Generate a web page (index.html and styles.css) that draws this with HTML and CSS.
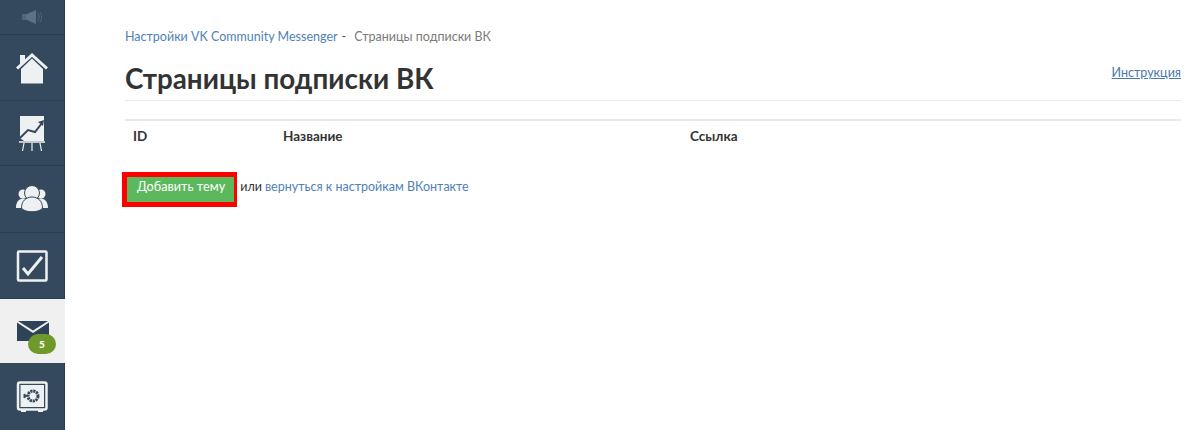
FILE: index.html
```html
<!DOCTYPE html>
<html lang="ru">
<head>
<meta charset="utf-8">
<title>Страницы подписки ВК</title>
<link rel="stylesheet" href="styles.css">
</head>
<body>
<div class="app">
  <nav class="sidebar">
    <a class="nav-item nav-top">
      <svg width="22" height="16" viewBox="0 0 22 16"><rect x="1" y="5" width="4" height="6" fill="#52657a"/><path d="M5 5.500 15 1v14L5 10.500z" fill="#5f7186"/><path d="M17 4c1.500 3 1.500 5 0 8M19 3c2 3 2 7 0 10" fill="none" stroke="#52657a" stroke-width="1"/></svg>
    </a>
    <a class="nav-item nav-home">
      <svg width="34" height="32" viewBox="0 0 34 32"><path d="M5 13V3h5v6z" fill="#eef1f2"/><path d="M6 17 17 6.500 28 17v14.500H6z" fill="#eef1f2"/><path d="M2 16.500 17 3l15 13.500" fill="none" stroke="#eef1f2" stroke-width="3"/></svg>
    </a>
    <a class="nav-item nav-chart">
      <svg width="28" height="38" viewBox="0 0 28 38"><path d="M2 2h24v25H2z" fill="#eef1f2"/><path d="M2 24 10 16l7 2 7-9" fill="none" stroke="#34495e" stroke-width="2"/><path d="M20 8l6-2-1 6z" fill="#34495e"/><path d="M2 24v3h4z" fill="#34495e"/><path d="M1 28h26" stroke="#eef1f2" stroke-width="1.500"/><path d="M6 29 4.500 37M14 29v8M22 29l1.500 8" stroke="#eef1f2" stroke-width="1.200"/></svg>
    </a>
    <a class="nav-item nav-users">
      <svg width="34" height="28" viewBox="0 0 34 28"><circle cx="8" cy="9" r="4.500" fill="#eef1f2"/><circle cx="26" cy="9" r="4.500" fill="#eef1f2"/><path d="M1 23c0-6 3-9.500 7-9.500s6 3 6 9.500zM33 23c0-6-3-9.500-7-9.500s-6 3-6 9.500z" fill="#eef1f2"/><circle cx="17" cy="8" r="7.500" fill="#eef1f2" stroke="#34495e"/><path d="M6.500 23c0-7 4.500-11 10.500-11s10.500 4 10.500 11c-3 5-18 5-21 0z" fill="#eef1f2" stroke="#34495e"/></svg>
    </a>
    <a class="nav-item nav-check">
      <svg width="32" height="32" viewBox="0 0 32 32"><rect x="2" y="1.500" width="28.500" height="29" rx="1" fill="#34495e" stroke="#eef1f2" stroke-width="2.500"/><path d="M7 18l5 6L26 7" fill="none" stroke="#eef1f2" stroke-width="3"/></svg>
    </a>
    <a class="nav-item nav-mail active">
      <svg width="32" height="20" viewBox="0 0 32 20"><path d="M1 0h30L16 9.500z" fill="#2f4358"/><path d="M0 1.500 16 12 32 1.500V20H0z" fill="#2f4358"/></svg>
      <span class="badge">5</span>
    </a>
    <a class="nav-item nav-safe">
      <svg width="32" height="32" viewBox="0 0 32 32"><rect x="2" y="1.500" width="28.500" height="27" rx="2" fill="#34495e" stroke="#eef1f2" stroke-width="2.500"/><rect x="4.500" y="4" width="23.500" height="22" fill="#eef1f2"/><circle cx="17" cy="15" r="5" fill="none" stroke="#34495e" stroke-width="3" stroke-dasharray="2.200 0.700"/><path d="M8 13v4l3-2z" fill="#34495e" stroke="#34495e"/><path d="M5 30h5M22 30h5" stroke="#eef1f2" stroke-width="2"/></svg>
    </a>
  </nav>
  <main class="content">
    <div class="crumbs"><a class="link">Настройки VK Community Messenger</a><span class="sep">-</span><span class="current">Страницы подписки ВК</span></div>
    <header class="title-row">
      <h1>Страницы подписки ВК</h1>
      <a class="guide">Инструкция</a>
    </header>
    <div class="table-head">
      <div class="col-id">ID</div>
      <div class="col-name">Название</div>
      <div class="col-link">Ссылка</div>
    </div>
    <div class="actions">
      <span class="btn-frame"><a class="btn">Добавить тему</a></span>
      <span class="or">или</span>
      <a class="link">вернуться к настройкам ВКонтакте</a>
    </div>
  </main>
</div>
</body>
</html>
```

FILE: styles.css
```css
html, body { margin: 0; height: 100%; background: #fff; }
body { font-family: Lato, "Open Sans", sans-serif; overflow: hidden; }
.app { display: flex; height: 430px; overflow: hidden; }
.sidebar { width: 64px; flex: none; background: #34495e; border-right: 1px solid #2b3d50; display: flex; flex-direction: column; }
.nav-item { display: flex; align-items: center; justify-content: center; flex: none; box-sizing: border-box; border-bottom: 1px solid #2b3d50; height: 66px; position: relative; }
.nav-top { height: 35px; }
.nav-home { height: 66px; }
.nav-chart { height: 65px; }
.nav-users { height: 67px; }
.nav-check { height: 66px; }
.nav-mail { height: 64px; }
.nav-safe { height: 67px; border-bottom: 0; }
.active { background: #f0f0f0; margin-right: -1px; border-bottom: 0; }
.badge { position: absolute; left: 28px; top: 35px; width: 28px; height: 20px; border-radius: 10px; background: #6f9a2b; color: #fff; font-size: 10px; font-weight: 900; display: flex; align-items: center; justify-content: center; }
.content { flex: 1; padding: 28px 18px 0 60px; min-width: 0; color: #333; }
.crumbs { font-size: 12.500px; line-height: 18px; color: #7a7a7a; }
.link { color: #4f81b8; }
.sep { margin: 0 8px 0 4px; color: #555; }
.title-row { display: flex; justify-content: space-between; margin-top: 11px; border-bottom: 1px solid #ebebeb; height: 43px; }
h1 { margin: 0; font-size: 27.800px; line-height: 43px; font-weight: 700; color: #333; }
.guide { font-size: 12.500px; line-height: 18px; margin-top: 7px; color: #4a7aa8; text-decoration: underline; }
.table-head { display: flex; margin-top: 18px; border-top: 2px solid #e8e8e8; padding: 6px 0 8px; font-size: 13.500px; line-height: 18px; font-weight: 700; color: #333; }
.col-id { width: 150px; padding-left: 8px; box-sizing: border-box; }
.col-name { width: 415px; padding-left: 8px; box-sizing: border-box; }
.actions { display: flex; align-items: baseline; margin-top: 19px; margin-left: -3px; font-size: 12.500px; }
.btn-frame { border: 5px solid #f00; border-right-width: 3px; display: flex; }
.btn { background: #5cb85c; color: #fff; font-size: 12.700px; line-height: 19px; padding: 0 9px 6px 10px; white-space: nowrap; }
.or { margin: 0 3px 0 3px; color: #333; }
```
